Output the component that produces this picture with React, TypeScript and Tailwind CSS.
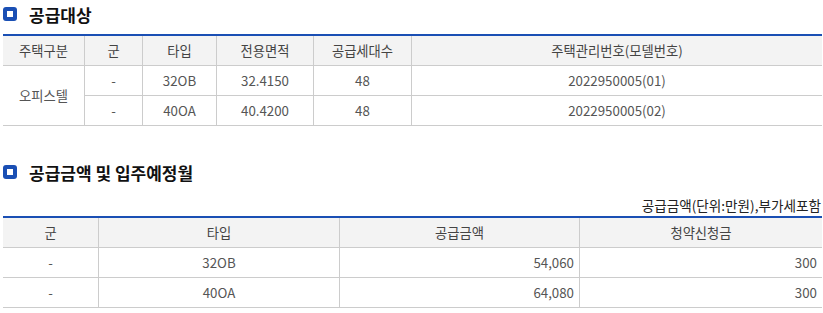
import React from "react";

const font = { fontFamily: '"Noto Sans CJK KR", "Noto Sans", sans-serif' };

function Title({ text }: { text: string }) {
  return (
    <div className="flex items-center h-[28px]">
      <div className="w-[14px] h-[14px] rounded-[3px] bg-[#1a4fb4] flex items-center justify-center">
        <div className="w-[6px] h-[6px] bg-white" />
      </div>
      <div className="ml-[12px] text-[17px] font-bold text-[#111] leading-none">{text}</div>
    </div>
  );
}

const H = "h-[30px] flex items-center justify-center bg-[#f3f3f3] border-b border-[#cccccc] text-[13.3px] text-[#444]";
const C = "h-[30px] flex items-center justify-center border-b border-[#cccccc] text-[13.3px] text-[#555]";

export default function App() {
  return (
    <div className="w-[823px] h-[313px] bg-white pl-[3px] pr-[1px]" style={font}>
      <div>
        <Title text="공급대상" />
      </div>
      <div className="mt-[6px] border-t-2 border-[#1a4fb4] grid grid-cols-[82px_58px_74px_97px_98px_1fr]">
        <div className={H + " border-r"}>주택구분</div>
        <div className={H + " border-r"}>군</div>
        <div className={H + " border-r"}>타입</div>
        <div className={H + " border-r"}>전용면적</div>
        <div className={H + " border-r"}>공급세대수</div>
        <div className={H}>주택관리번호(모델번호)</div>

        <div className="row-span-2 flex items-center justify-center border-b border-r border-[#cccccc] text-[13.3px] text-[#555]">오피스텔</div>
        <div className={C + " border-r"}>-</div>
        <div className={C + " border-r"}>32OB</div>
        <div className={C + " border-r"}>32.4150</div>
        <div className={C + " border-r"}>48</div>
        <div className={C}>2022950005(01)</div>

        <div className={C + " border-r"}>-</div>
        <div className={C + " border-r"}>40OA</div>
        <div className={C + " border-r"}>40.4200</div>
        <div className={C + " border-r"}>48</div>
        <div className={C}>2022950005(02)</div>
      </div>

      <div className="mt-[32px]">
        <Title text="공급금액 및 입주예정월" />
      </div>
      <div className="mt-[10px] flex justify-end text-[13.6px] text-[#222] leading-[18px] pr-[1px]">
        공급금액(단위:만원),부가세포함
      </div>
      <div className="mt-[2px] border-t-2 border-[#1a4fb4] grid grid-cols-[96px_241px_240px_1fr]">
        <div className={H + " border-r"}>군</div>
        <div className={H + " border-r"}>타입</div>
        <div className={H + " border-r"}>공급금액</div>
        <div className={H}>청약신청금</div>

        <div className={C + " border-r"}>-</div>
        <div className={C + " border-r"}>32OB</div>
        <div className={C + " border-r !justify-end pr-[5px]"}>54,060</div>
        <div className={C + " !justify-end pr-[5px]"}>300</div>

        <div className={C + " border-r"}>-</div>
        <div className={C + " border-r"}>40OA</div>
        <div className={C + " border-r !justify-end pr-[5px]"}>64,080</div>
        <div className={C + " !justify-end pr-[5px]"}>300</div>
      </div>
    </div>
  );
}
